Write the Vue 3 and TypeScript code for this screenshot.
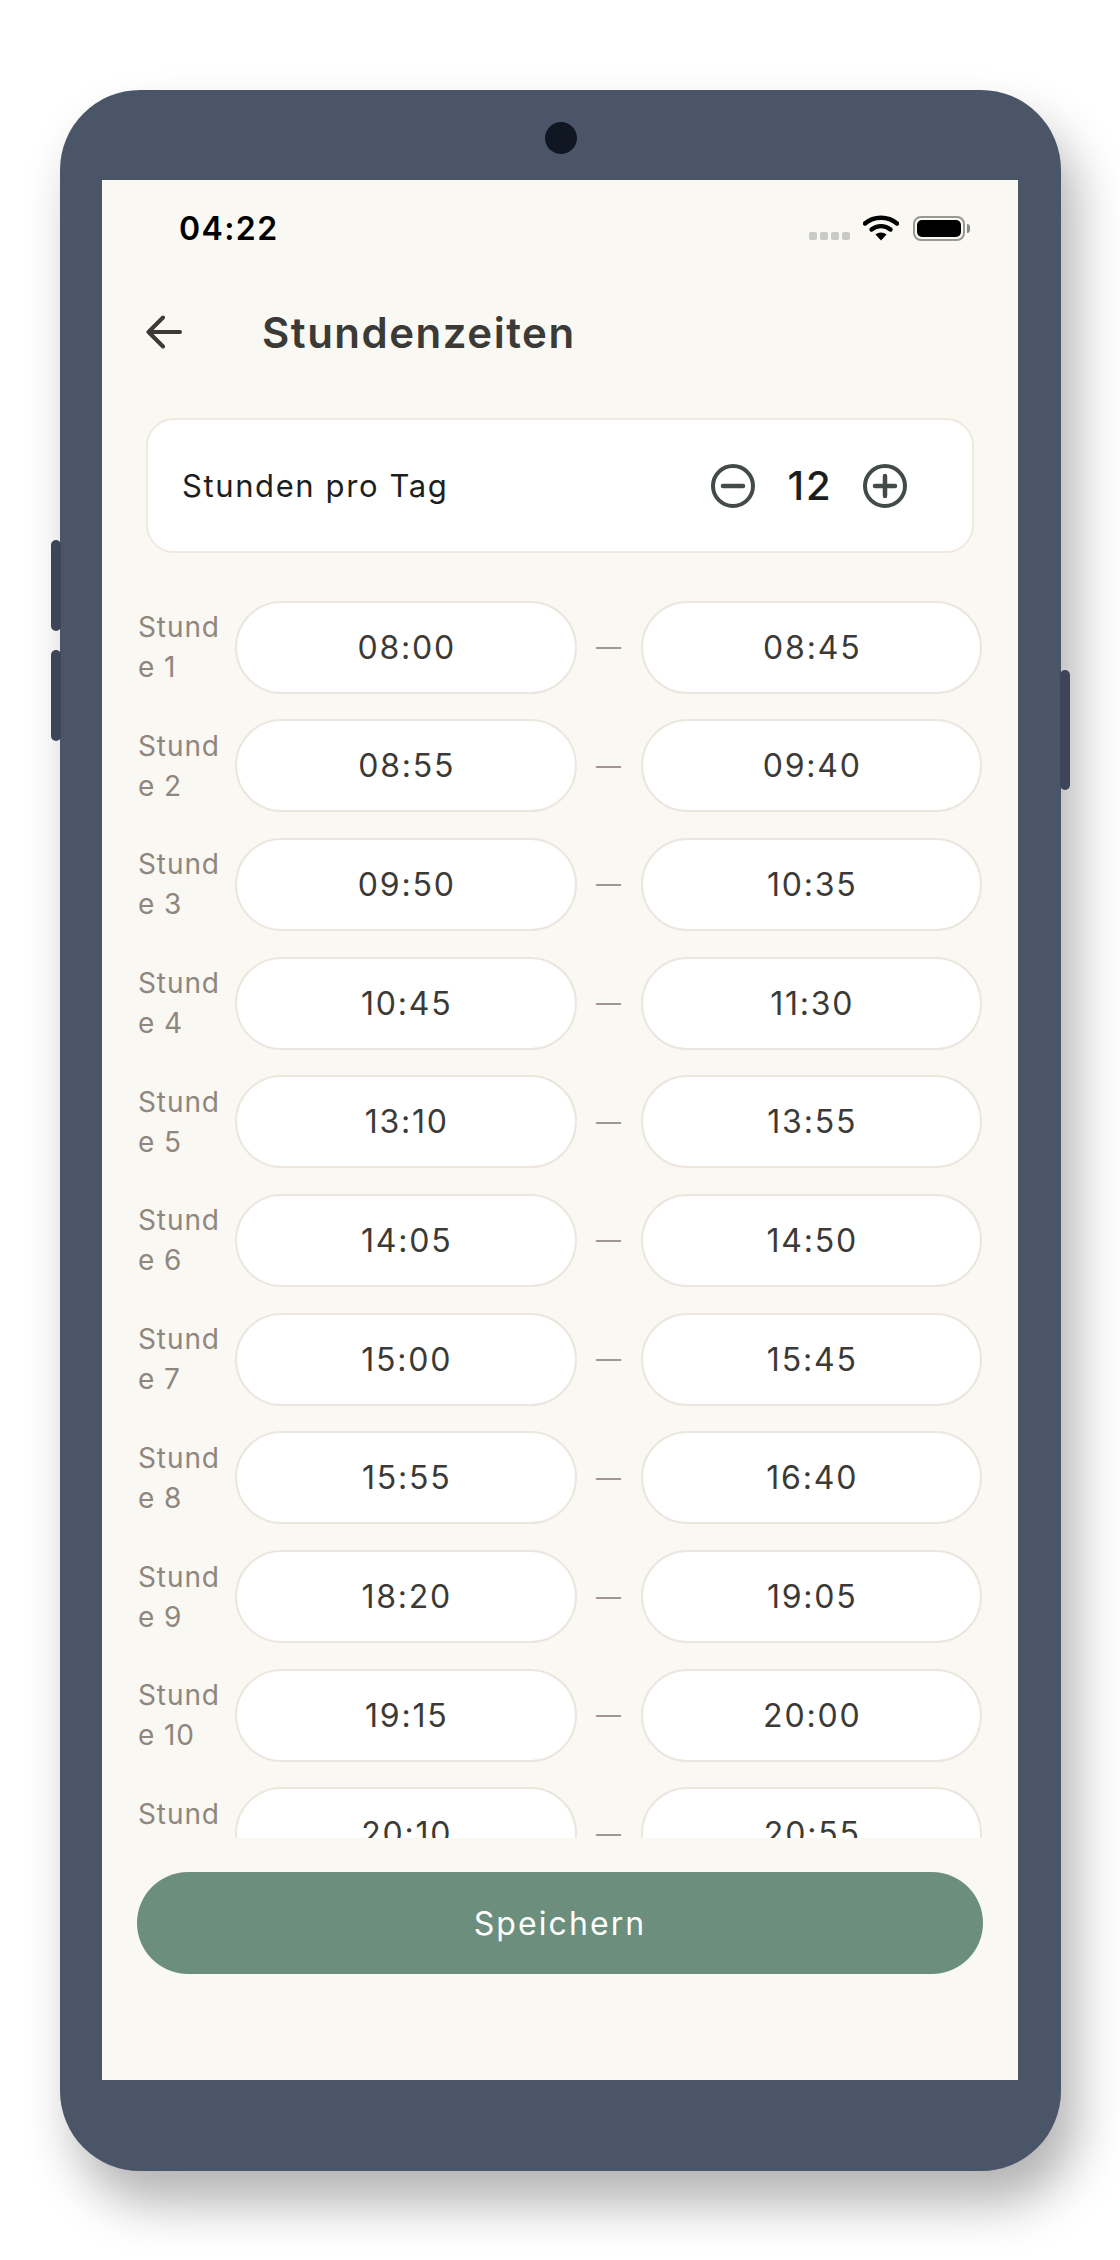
<template>
  <div class="page">
    <div class="phone">
      <span class="side side_left_a"></span>
      <span class="side side_left_b"></span>
      <span class="side side_right"></span>
      <span class="camera"></span>

      <div class="screen">
        <div class="status">
          <span class="time">04:22</span>
          <div class="status_icons">
            <div class="signal"><i v-for="n in 4" :key="n"></i></div>
            <svg class="wifi" width="36" height="26" viewBox="0 0 36 26">
              <path d="M2 8.5C11 .8 25 .8 34 8.5" fill="none" stroke="#000" stroke-width="4.4" stroke-linecap="round" />
              <path d="M8.5 14.5C14 10 22 10 27.500 14.500" fill="none" stroke="#000" stroke-width="4.4" stroke-linecap="round" />
              <path d="M12.500 19.500C15.500 16.800 20.500 16.800 23.500 19.500L18 25.500Z" fill="#000" />
            </svg>
            <div class="battery"><i></i></div>
            <span class="battery_nub"></span>
          </div>
        </div>

        <div class="header">
          <svg class="back" width="36" height="34" viewBox="0 0 36 34">
            <path d="M34 17H3M17 2.500 2.500 17 17 31.500" fill="none" stroke="#3b3a36" stroke-width="4" stroke-linecap="round" stroke-linejoin="round" />
          </svg>
          <h1>Stundenzeiten</h1>
        </div>

        <div class="card">
          <span class="card_label">Stunden pro Tag</span>
          <div class="stepper">
            <svg width="44" height="44" viewBox="0 0 44 44">
              <circle cx="22" cy="22" r="20" fill="none" stroke="#434b47" stroke-width="4" />
              <path d="M12 22h20" stroke="#434b47" stroke-width="4.500" stroke-linecap="round" />
            </svg>
            <span class="count">12</span>
            <svg width="44" height="44" viewBox="0 0 44 44">
              <circle cx="22" cy="22" r="20" fill="none" stroke="#434b47" stroke-width="4" />
              <path d="M12 22h20M22 12v20" stroke="#434b47" stroke-width="4.500" stroke-linecap="round" />
            </svg>
          </div>
        </div>

        <div class="list">
          <div class="row" v-for="(slot, i) in slots" :key="i">
            <span class="row_label">Stunde {{ i + 1 }}</span>
            <div class="pill">{{ slot[0] }}</div>
            <span class="dash">—</span>
            <div class="pill">{{ slot[1] }}</div>
          </div>
        </div>

        <div class="footer">
          <button class="save">Speichern</button>
        </div>
      </div>
    </div>
  </div>
</template>

<script setup lang="ts">
const slots: [string, string][] = [
  ['08:00', '08:45'],
  ['08:55', '09:40'],
  ['09:50', '10:35'],
  ['10:45', '11:30'],
  ['13:10', '13:55'],
  ['14:05', '14:50'],
  ['15:00', '15:45'],
  ['15:55', '16:40'],
  ['18:20', '19:05'],
  ['19:15', '20:00'],
  ['20:10', '20:55'],
  ['21:05', '21:50'],
]
</script>

<style>
html,
body {
  background: #fff;
}
</style>

<style scoped>
.page {
  width: 1120px;
  height: 2260px;
  padding: 90px 0 0 60px;
  box-sizing: border-box;
  overflow: hidden;
  font-family: Inter, sans-serif;
}

.phone {
  position: relative;
  width: 1001px;
  height: 2081px;
  padding: 90px 43px 91px 42px;
  box-sizing: border-box;
  background: #4a5568;
  border-radius: 80px;
  box-shadow: 15px 32px 50px rgba(0, 0, 0, 0.3);
}

.side {
  position: absolute;
  width: 10px;
  border-radius: 5px;
  background: #3d4558;
}

.side_left_a {
  left: -9px;
  top: 450px;
  height: 91px;
}

.side_left_b {
  left: -9px;
  top: 560px;
  height: 91px;
}

.side_right {
  right: -9px;
  top: 580px;
  height: 120px;
}

.camera {
  position: absolute;
  left: 485px;
  top: 32px;
  width: 32px;
  height: 32px;
  border-radius: 50%;
  background: #111722;
}

.screen {
  height: 1900px;
  display: flex;
  flex-direction: column;
  background: #f9f8f3;
}

.status {
  height: 96px;
  flex: none;
  display: flex;
  justify-content: space-between;
  align-items: center;
  padding: 0 48px 0 77px;
}

.time {
  font-size: 32px;
  font-weight: 600;
  letter-spacing: 1.4px;
  color: #000;
}

.status_icons {
  display: flex;
  align-items: center;
}

.signal {
  display: flex;
  gap: 3px;
  margin: 16px 13px 0 0;
}

.signal i {
  width: 8px;
  height: 8px;
  border-radius: 2px;
  background: #c9c9c7;
}

.wifi {
  margin-right: 14px;
}

.battery {
  width: 52px;
  height: 25px;
  padding: 2px;
  box-sizing: border-box;
  border: 2px solid #999892;
  border-radius: 8px;
}

.battery i {
  display: block;
  height: 100%;
  border-radius: 5px;
  background: #000;
}

.battery_nub {
  width: 3px;
  height: 9px;
  margin-left: 2px;
  border-radius: 0 3px 3px 0;
  background: #888;
}

.header {
  height: 112px;
  flex: none;
  display: flex;
  align-items: center;
  padding-left: 44px;
}

.back {
  flex: none;
}

h1 {
  margin: 0 0 0 80px;
  font-size: 42px;
  font-weight: 600;
  letter-spacing: 1.500px;
  color: #3b3a36;
}

.card {
  height: 135px;
  flex: none;
  margin: 30px 44px 0;
  padding: 0 65px 0 34px;
  box-sizing: border-box;
  display: flex;
  align-items: center;
  justify-content: space-between;
  background: #fff;
  border: 2px solid #efe9e0;
  border-radius: 28px;
}

.card_label {
  font-size: 31px;
  letter-spacing: 1.6px;
  color: #1c1f1e;
}

.stepper {
  display: flex;
  align-items: center;
}

.count {
  width: 108px;
  padding-left: 2px;
  box-sizing: border-box;
  text-align: center;
  font-size: 40px;
  font-weight: 500;
  letter-spacing: 2px;
  color: #1a1f1d;
}

.list {
  flex: 1;
  min-height: 0;
  overflow: hidden;
  margin-top: 47.500px;
  padding: 0 36px 0 36px;
  display: flex;
  flex-direction: column;
  gap: 25.700px;
}

.row {
  height: 93px;
  flex: none;
  display: flex;
  align-items: center;
}

.row_label {
  flex: 0 0 97px;
  width: 97px;
  padding-right: 9px;
  box-sizing: border-box;
  font-size: 28px;
  line-height: 40px;
  letter-spacing: 0.9px;
  word-break: break-all;
  color: #8f867e;
}

.pill {
  flex: 1;
  height: 93px;
  box-sizing: border-box;
  display: flex;
  align-items: center;
  justify-content: center;
  padding-left: 2px;
  background: #fff;
  border: 2.500px solid #ece7de;
  border-radius: 47px;
  font-size: 32px;
  letter-spacing: 1.800px;
  color: #3b3a36;
}

.dash {
  flex: 0 0 64px;
  text-align: center;
  font-size: 25px;
  color: #a09890;
}

.footer {
  height: 242px;
  flex: none;
  padding: 34px 35px 0;
  box-sizing: border-box;
}

.save {
  display: block;
  width: 100%;
  height: 102px;
  padding: 0;
  border: none;
  border-radius: 51px;
  background: #6c8e7c;
  color: #fff;
  font-family: inherit;
  font-size: 32px;
  font-weight: 400;
  letter-spacing: 2.100px;
}
</style>
